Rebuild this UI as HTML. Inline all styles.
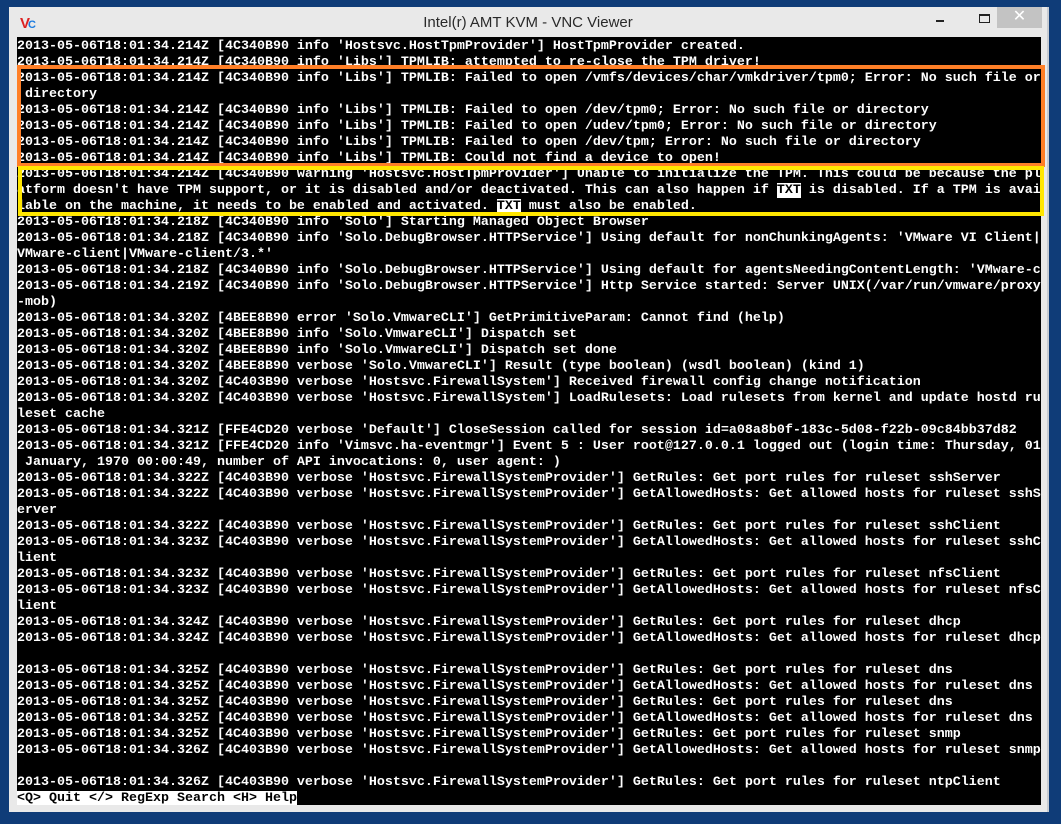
<!DOCTYPE html>
<html><head><meta charset="utf-8">
<style>
html,body{margin:0;padding:0;}
body{width:1061px;height:824px;background:#0f3c78;position:relative;overflow:hidden;font-family:"Liberation Sans",sans-serif;}
.win{position:absolute;left:9px;top:7px;width:1038px;height:805px;background:#e9e9e9;border-right:2px solid #c8ccd2;}
.title{position:absolute;left:0;top:0;width:1038px;height:30px;text-align:center;line-height:32px;font-size:15px;color:#2a2a2a;}
.close{position:absolute;left:988px;top:0;width:45px;height:21px;background:#c3c3c3;color:#fff;text-align:center;line-height:20px;font-size:16px;}
.min{position:absolute;left:927px;top:13px;width:8px;height:2px;background:#222;}
.max{position:absolute;left:970px;top:7px;width:9px;height:6px;border:1px solid #222;border-top-width:2px;}
.icon{position:absolute;left:11px;top:8px;font-size:15px;font-weight:bold;color:#d22;letter-spacing:-2px;}
.icon span{color:#1a7be0;font-size:11px;}
.term{position:absolute;left:17px;top:37px;width:1024px;height:768px;background:#000;overflow:hidden;}
.term pre{margin:0;padding-top:2px;font-family:"Liberation Mono",monospace;font-weight:bold;font-size:13.33px;line-height:16px;color:#fff;white-space:pre;}
.hl{background:#fff;color:#000;}
.box{position:absolute;box-sizing:border-box;}
</style></head><body>
<div class="win">
<div class="icon">V<span>C</span></div>
<div class="title">Intel(r) AMT KVM - VNC Viewer</div>
<div class="min"></div><div class="max"></div>
<div class="close">✕</div>
</div>
<div class="term"><pre>2013-05-06T18:01:34.214Z [4C340B90 info 'Hostsvc.HostTpmProvider'] HostTpmProvider created.
2013-05-06T18:01:34.214Z [4C340B90 info 'Libs'] TPMLIB: attempted to re-close the TPM driver!
2013-05-06T18:01:34.214Z [4C340B90 info 'Libs'] TPMLIB: Failed to open /vmfs/devices/char/vmkdriver/tpm0; Error: No such file or
 directory
2013-05-06T18:01:34.214Z [4C340B90 info 'Libs'] TPMLIB: Failed to open /dev/tpm0; Error: No such file or directory
2013-05-06T18:01:34.214Z [4C340B90 info 'Libs'] TPMLIB: Failed to open /udev/tpm0; Error: No such file or directory
2013-05-06T18:01:34.214Z [4C340B90 info 'Libs'] TPMLIB: Failed to open /dev/tpm; Error: No such file or directory
2013-05-06T18:01:34.214Z [4C340B90 info 'Libs'] TPMLIB: Could not find a device to open!
2013-05-06T18:01:34.214Z [4C340B90 warning 'Hostsvc.HostTpmProvider'] Unable to initialize the TPM. This could be because the pl
atform doesn't have TPM support, or it is disabled and/or deactivated. This can also happen if <span class="hl">TXT</span> is disabled. If a TPM is avai
lable on the machine, it needs to be enabled and activated. <span class="hl">TXT</span> must also be enabled.
2013-05-06T18:01:34.218Z [4C340B90 info 'Solo'] Starting Managed Object Browser
2013-05-06T18:01:34.218Z [4C340B90 info 'Solo.DebugBrowser.HTTPService'] Using default for nonChunkingAgents: 'VMware VI Client|
VMware-client|VMware-client/3.*'
2013-05-06T18:01:34.218Z [4C340B90 info 'Solo.DebugBrowser.HTTPService'] Using default for agentsNeedingContentLength: 'VMware-c
2013-05-06T18:01:34.219Z [4C340B90 info 'Solo.DebugBrowser.HTTPService'] Http Service started: Server UNIX(/var/run/vmware/proxy
-mob)
2013-05-06T18:01:34.320Z [4BEE8B90 error 'Solo.VmwareCLI'] GetPrimitiveParam: Cannot find (help)
2013-05-06T18:01:34.320Z [4BEE8B90 info 'Solo.VmwareCLI'] Dispatch set
2013-05-06T18:01:34.320Z [4BEE8B90 info 'Solo.VmwareCLI'] Dispatch set done
2013-05-06T18:01:34.320Z [4BEE8B90 verbose 'Solo.VmwareCLI'] Result (type boolean) (wsdl boolean) (kind 1)
2013-05-06T18:01:34.320Z [4C403B90 verbose 'Hostsvc.FirewallSystem'] Received firewall config change notification
2013-05-06T18:01:34.320Z [4C403B90 verbose 'Hostsvc.FirewallSystem'] LoadRulesets: Load rulesets from kernel and update hostd ru
leset cache
2013-05-06T18:01:34.321Z [FFE4CD20 verbose 'Default'] CloseSession called for session id=a08a8b0f-183c-5d08-f22b-09c84bb37d82
2013-05-06T18:01:34.321Z [FFE4CD20 info 'Vimsvc.ha-eventmgr'] Event 5 : User root@127.0.0.1 logged out (login time: Thursday, 01
 January, 1970 00:00:49, number of API invocations: 0, user agent: )
2013-05-06T18:01:34.322Z [4C403B90 verbose 'Hostsvc.FirewallSystemProvider'] GetRules: Get port rules for ruleset sshServer
2013-05-06T18:01:34.322Z [4C403B90 verbose 'Hostsvc.FirewallSystemProvider'] GetAllowedHosts: Get allowed hosts for ruleset sshS
erver
2013-05-06T18:01:34.322Z [4C403B90 verbose 'Hostsvc.FirewallSystemProvider'] GetRules: Get port rules for ruleset sshClient
2013-05-06T18:01:34.323Z [4C403B90 verbose 'Hostsvc.FirewallSystemProvider'] GetAllowedHosts: Get allowed hosts for ruleset sshC
lient
2013-05-06T18:01:34.323Z [4C403B90 verbose 'Hostsvc.FirewallSystemProvider'] GetRules: Get port rules for ruleset nfsClient
2013-05-06T18:01:34.323Z [4C403B90 verbose 'Hostsvc.FirewallSystemProvider'] GetAllowedHosts: Get allowed hosts for ruleset nfsC
lient
2013-05-06T18:01:34.324Z [4C403B90 verbose 'Hostsvc.FirewallSystemProvider'] GetRules: Get port rules for ruleset dhcp
2013-05-06T18:01:34.324Z [4C403B90 verbose 'Hostsvc.FirewallSystemProvider'] GetAllowedHosts: Get allowed hosts for ruleset dhcp

2013-05-06T18:01:34.325Z [4C403B90 verbose 'Hostsvc.FirewallSystemProvider'] GetRules: Get port rules for ruleset dns
2013-05-06T18:01:34.325Z [4C403B90 verbose 'Hostsvc.FirewallSystemProvider'] GetAllowedHosts: Get allowed hosts for ruleset dns
2013-05-06T18:01:34.325Z [4C403B90 verbose 'Hostsvc.FirewallSystemProvider'] GetRules: Get port rules for ruleset dns
2013-05-06T18:01:34.325Z [4C403B90 verbose 'Hostsvc.FirewallSystemProvider'] GetAllowedHosts: Get allowed hosts for ruleset dns
2013-05-06T18:01:34.325Z [4C403B90 verbose 'Hostsvc.FirewallSystemProvider'] GetRules: Get port rules for ruleset snmp
2013-05-06T18:01:34.326Z [4C403B90 verbose 'Hostsvc.FirewallSystemProvider'] GetAllowedHosts: Get allowed hosts for ruleset snmp

2013-05-06T18:01:34.326Z [4C403B90 verbose 'Hostsvc.FirewallSystemProvider'] GetRules: Get port rules for ruleset ntpClient
<span class="hl">&lt;Q&gt; Quit &lt;/&gt; RegExp Search &lt;H&gt; Help</span></pre></div>
<div class="box" style="left:17px;top:65px;width:1028px;height:102px;border:4px solid #ff7f27;"></div>
<div class="box" style="left:18px;top:166px;width:1026px;height:50px;border:4px solid #ffe600;"></div>
</body></html>
